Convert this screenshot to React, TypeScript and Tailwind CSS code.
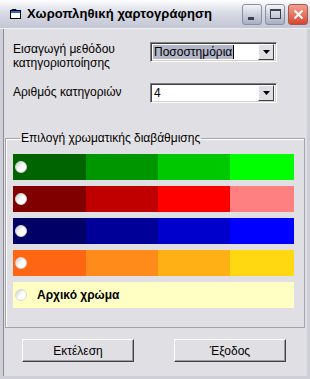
export default function App() {
  const rows = [
    ["#006400", "#009600", "#00c800", "#00ff00"],
    ["#800000", "#c00000", "#ff0000", "#ff8080"],
    ["#000066", "#000099", "#0000cc", "#0000ff"],
    ["#ff6614", "#ff8c1a", "#ffb014", "#ffd812"],
  ]

  return (
    <div className="w-[310px] h-[379px] overflow-hidden bg-[#e0dfe3] flex flex-col font-['Liberation_Sans',sans-serif] text-[12px] text-black">
      {/* title bar */}
      <div className="h-[29px] flex items-center bg-gradient-to-b from-[#fdfdfe] via-[#d6d8e3] to-[#c3c6d4] border-b border-[#eeeef4] pl-[10px] pr-[2px]">
        <svg width="11" height="11" viewBox="0 0 11 11" className="mt-[1px]">
          <rect x="0.5" y="1.5" width="10" height="8" fill="#fff" stroke="#000" />
          <rect x="1" y="2" width="9" height="2" fill="#2a6ad0" />
          <path d="M0.5 1.5 L3 0.5 L6 0.5 L6 1.5" fill="none" stroke="#000" />
        </svg>
        <span className="ml-[6px] font-bold text-[13px] tracking-[0.1px] text-black">Χωροπληθική χαρτογράφηση</span>
        <div className="ml-auto flex gap-[3px]">
          <div className="w-[20px] h-[21px] rounded-[3px] border border-[#8a8ea4] bg-gradient-to-b from-[#f4f5f8] to-[#a9aec2] relative">
            <div className="absolute left-[5px] bottom-[4px] w-[6px] h-[3px] bg-[#3c4050]" />
          </div>
          <div className="w-[20px] h-[21px] rounded-[3px] border border-[#8a8ea4] bg-gradient-to-b from-[#f4f5f8] to-[#a9aec2] flex items-center justify-center">
            <div className="w-[11px] h-[10px] border border-[#3c4050] border-t-[2px]" />
          </div>
          <div className="w-[20px] h-[21px] rounded-[3px] border border-[#9c5a50] bg-gradient-to-b from-[#f2a090] to-[#d8442c] flex items-center justify-center">
            <svg width="11" height="11" viewBox="0 0 11 11">
              <path d="M1.5 1.5 L9.5 9.5 M9.5 1.5 L1.5 9.5" stroke="#fff" strokeWidth="2" />
            </svg>
          </div>
        </div>
      </div>

      {/* body */}
      <div className="flex-1 border-l-[3px] border-r-[3px] border-b-[3px] border-[#cfcfd8]">
        <div className="h-full border-l border-[#8c8c98] flex flex-col">
          <div className="flex items-start pt-[13px] pl-[9px]">
            <div className="w-[137px] leading-[14px]">
              <div>Εισαγωγή μεθόδου</div>
              <div>κατηγοριοποίησης</div>
            </div>
            <Combo value="Ποσοστημόρια" selected />
          </div>

          <div className="flex items-start mt-[13px] pl-[9px]">
            <div className="w-[137px] leading-[14px] pt-[2px]">Αριθμός κατηγοριών</div>
            <Combo value="4" />
          </div>

          <fieldset className="ml-[1px] mt-[28px] w-[300px] h-[197px] border border-[#a3a3ae] shadow-[inset_1px_1px_0_#fff] pl-[7px] pt-[9px]">
            <legend className="ml-[7px] px-[1px] leading-[14px]">Επιλογή χρωματικής διαβάθμισης</legend>
            <div className="flex flex-col gap-[6px]">
              {rows.map((r, i) => (
                <div key={i} className="flex w-[281px] h-[26px]">
                  <div className="w-[73px] flex items-center pl-[2px]" style={{ backgroundColor: r[0] }}>
                    <Radio />
                  </div>
                  <div className="w-[72px]" style={{ backgroundColor: r[1] }} />
                  <div className="w-[72px]" style={{ backgroundColor: r[2] }} />
                  <div className="flex-1" style={{ backgroundColor: r[3] }} />
                </div>
              ))}
              <div className="flex items-center w-[281px] h-[26px] bg-[#ffffc4] pl-[2px]">
                <Radio />
                <span className="ml-[10px] font-bold">Αρχικό χρώμα</span>
              </div>
            </div>
          </fieldset>

          <div className="flex gap-[40px] pl-[18px] mt-[11px]">
            <Button label="Εκτέλεση" />
            <Button label="Έξοδος" />
          </div>
        </div>
      </div>
    </div>
  )
}

function Combo({ value, selected }: { value: string; selected?: boolean }) {
  return (
    <div className="w-[127px] h-[20px] bg-white flex items-center border-t border-l border-[#808080] border-b border-r border-b-white border-r-white shadow-[inset_1px_1px_0_#404040,inset_-1px_-1px_0_#d4d0c8]">
      <div className="flex-1 flex items-center pl-[2px]">
        {selected ? (
          <>
            <span className="bg-[#b2b6c8] leading-[14px] px-[1px]">{value}</span>
            <span className="w-[1px] h-[14px] bg-black" />
          </>
        ) : (
          <span className="leading-[14px] px-[1px]">{value}</span>
        )}
      </div>
      <div className="w-[16px] h-[16px] mr-[2px] bg-[#e0dfe3] border border-t-white border-l-white border-b-[#404040] border-r-[#404040] flex items-center justify-center">
        <svg width="7" height="4" viewBox="0 0 7 4">
          <path d="M0 0 H7 L3.5 4 Z" fill="#000" />
        </svg>
      </div>
    </div>
  )
}

function Radio() {
  return <div className="w-[12px] h-[12px] rounded-full bg-gradient-to-br from-[#c8c8c8] via-white to-white border border-[#d8d8d8]" />
}

function Button({ label }: { label: string }) {
  return (
    <div className="w-[112px] h-[23px] flex items-center justify-center bg-[#e0dfe3] border border-t-white border-l-white border-b-[#404040] border-r-[#404040] shadow-[inset_-1px_-1px_0_#9c9ca4]">
      {label}
    </div>
  )
}
